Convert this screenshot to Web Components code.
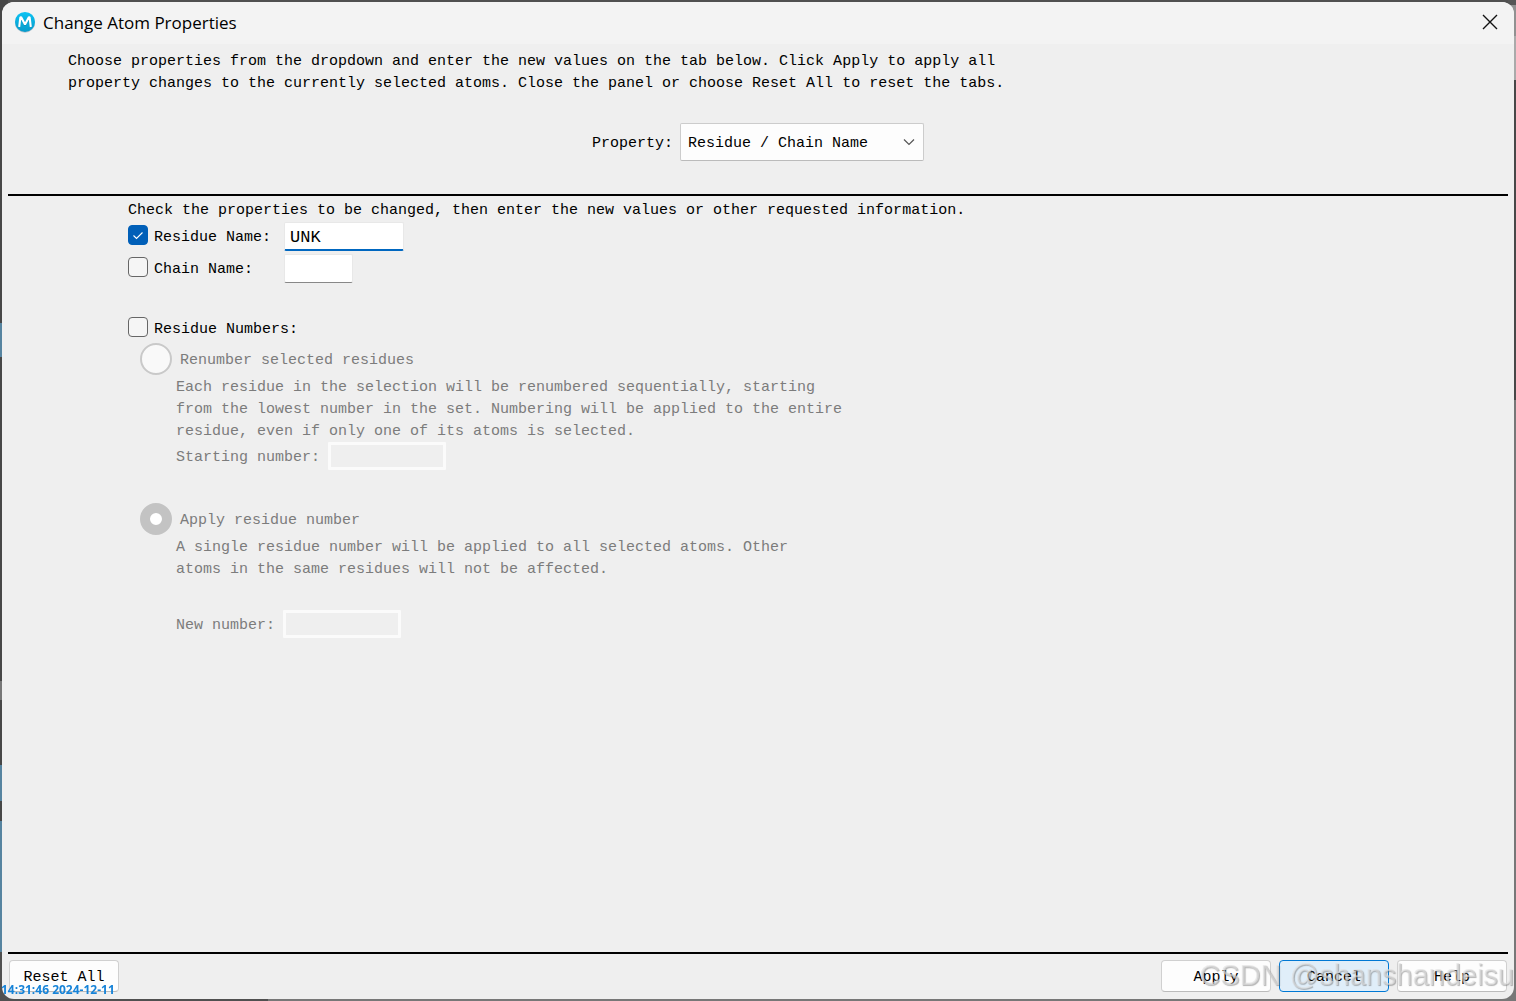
<!DOCTYPE html>
<html lang="en">
<head>
<meta charset="utf-8">
<title>Change Atom Properties</title>
<style>
html, body { height: 100%; margin: 0; }
body {
  --mono: "Liberation Mono", monospace;
  --ui: "Open Sans", "Noto Sans", sans-serif;
  font: 15px/22px var(--mono);
  color: #000;
  overflow: hidden;
}
</style>
</head>
<body>
<dialog-window heading="Change Atom Properties">
  <property-picker slot="intro">
    Choose properties from the dropdown and enter the new values on the tab below. Click Apply to apply all<br>
    property changes to the currently selected atoms. Close the panel or choose Reset All to reset the tabs.
  </property-picker>
  <residue-form></residue-form>
  <push-button slot="left">Reset All</push-button>
  <push-button slot="right">Apply</push-button>
  <push-button slot="right" primary>Cancel</push-button>
  <push-button slot="right">Help</push-button>
</dialog-window>
<stamp-text kind="time">14:31:46 2024-12-11</stamp-text>
<stamp-text kind="mark">CSDN @shanshandeisu</stamp-text>

<script>
class Base extends HTMLElement {
  connectedCallback() {
    if (this.shadowRoot) return;
    this.attachShadow({ mode: "open" }).innerHTML = "<style>*{box-sizing:border-box}</style>" + this.render();
  }
}

customElements.define("app-logo", class extends Base {
  render() {
    return `<style>:host{display:block;width:22px;height:22px} svg{display:block}</style>
    <svg width="22" height="22" viewBox="0 0 22 22" aria-hidden="true">
      <defs><linearGradient id="g" x1="0" y1="0" x2="0" y2="1"><stop offset="0" stop-color="#0cc3f3"/><stop offset="1" stop-color="#079bcb"/></linearGradient></defs>
      <circle cx="11" cy="11.7" r="10" fill="#b9c4ce"/>
      <circle cx="11" cy="10.9" r="10" fill="url(#g)"/>
      <path d="M5.6 16.7 6.6 6.7H7.2L11 14.2 14.8 6.7H15.4L16.4 16.7" fill="none" stroke="#087da6" stroke-opacity=".5" stroke-width="2.2" stroke-linejoin="bevel"/>
      <path d="M5.2 16 6.4 6.2H7.2L11 13.6 14.8 6.2H15.6L16.8 16" fill="none" stroke="#fff" stroke-width="2.1" stroke-linejoin="bevel"/>
    </svg>`;
  }
});

customElements.define("dialog-window", class extends Base {
  render() {
    return `<style>
      :host{display:block;height:100%;box-sizing:border-box;padding:2px;
        background:
          linear-gradient(#474747 323px,#5684a0 323px 357px,#474747 357px 681px,#777 681px 700px,#474747 700px 765px,#5684a0 765px 801px,#474747 801px 821px,#5684a0 821px 952px,#505050 952px) left/8px 100% no-repeat,
          linear-gradient(#555 5px,#919191 5px 36px,#aaa 36px 80px,#474747 80px 400px,#777 400px) right/8px 100% no-repeat,
          linear-gradient(90deg,#505050 268px,#777 268px) bottom/100% 8px no-repeat,#505050}
      .frame{height:100%;display:flex;flex-direction:column;background:#efefef;border-radius:12px;overflow:hidden}
      header{flex:none;height:42px;padding:0 15px 0 12px;display:flex;align-items:center;gap:7px;background:#f3f3f3}
      app-logo,header button{margin-bottom:2px}
      h1{flex:1;margin:0;font:400 17px/24px var(--ui)}
      header button{width:18px;height:18px;padding:0;border:0;background:none}
      header svg{display:block}
      main{flex:1;min-height:0;padding:0 6px;display:flex;flex-direction:column}
      .tab{flex:1;border:solid #000;border-width:2px 0;padding:4px 120px}
      footer{flex:none;display:flex;justify-content:space-between;padding:6px 7px 7px}
      footer div{display:flex;gap:8px}
    </style>
    <div class="frame">
      <header><app-logo></app-logo><h1>${this.getAttribute("heading")}</h1>
        <button aria-label="Close"><svg width="18" height="18" viewBox="0 0 18 18"><path d="M2 2 16 16M16 2 2 16" stroke="#111" stroke-width="1.4" fill="none"/></svg></button>
      </header>
      <main><slot name="intro"></slot><section class="tab"><slot></slot></section></main>
      <footer><div><slot name="left"></slot></div><div><slot name="right"></slot></div></footer>
    </div>`;
  }
});

customElements.define("property-picker", class extends Base {
  render() {
    return `<style>
      :host{display:block;padding:7px 60px 33px}
      p{margin:0 0 28px}
      .row{display:flex;justify-content:center;align-items:center;gap:7px;margin:0 -60px}
      .box{display:grid;align-items:center}
      label{padding-top:3px}
      select,svg{grid-area:1/1}
      select{appearance:none;width:244px;height:38px;padding:3px 36px 0 7px;font:inherit;color:#000;background:#fdfdfd;border:1px solid #ccc;border-bottom-color:#bbb;border-radius:2px}
      svg{justify-self:end;margin-right:8px;pointer-events:none}
    </style>
    <p><slot></slot></p>
    <div class="row"><label for="p">Property:</label>
      <span class="box"><select id="p"><option>Residue / Chain Name</option></select>
      <svg width="14" height="8" viewBox="0 0 14 8"><path d="M2 1.5 7 6.5 12 1.5" fill="none" stroke="#555" stroke-width="1.2"/></svg></span>
    </div>`;
  }
});

customElements.define("check-field", class extends Base {
  render() {
    const on = this.hasAttribute("checked");
    return `<style>
      :host{display:flex;align-items:flex-start;height:32px}
      .pick{display:flex;align-items:center;gap:6px;width:156px;height:32px;white-space:nowrap}
      input{appearance:none;flex:none;width:20px;height:20px;margin:0;border:1px solid #666;border-radius:4px;background:#f5f5f5}
      input:checked{border-color:#005fb8;background:#005fb8}
      .tick{display:grid;place-items:center;margin-bottom:6px}
      .tick>*{grid-area:1/1}
      svg{pointer-events:none}
    </style>
    <label class="pick"><span class="tick"><input type="checkbox"${on ? " checked" : ""}>${on ? `<svg width="20" height="20" viewBox="0 0 20 20"><path d="M5.5 10.5 8.5 13.5 14.5 7.5" fill="none" stroke="#fff" stroke-width="1.1"/></svg>` : ""}</span>${this.getAttribute("label")}</label><slot></slot>`;
  }
});

customElements.define("text-field", class extends Base {
  render() {
    return `<style>
      :host{display:block}
      input{display:block;width:120px;height:29px;padding:2px 5px 0;font:17px/22px var(--mono);color:#000;
        background:#fff;border:1px solid #e8e8e8;border-bottom:1px solid #888;border-radius:2px;outline:0}
      :host([small]) input{width:69px}
      :host([active]) input{border-bottom:2px solid #0067c0}
    </style>
    <input type="text" aria-label="${this.getAttribute("label")}" value="${this.getAttribute("value") || ""}">`;
  }
});

customElements.define("number-option", class extends Base {
  render() {
    return `<style>
      :host{display:block;padding-left:12px;color:#7c7c7c}
      .pick{display:flex;align-items:center;gap:8px;height:32px}
      .pick input{appearance:none;width:32px;height:32px;margin:0 0 4px;border:2px solid #c9c9c9;border-radius:50%;background:#f9f9f9}
      .pick input:checked{border:10px solid #c3c3c3;background:#fff}
      p{margin:0;padding-left:36px}
      .num{display:flex;align-items:center;gap:8px;height:30px;padding-left:36px}
      .num input{width:118px;height:28px;margin:0 0 4px;background:#efefef;border:3px solid #fbfbfb;border-radius:1px}
      :host([spaced]) .num{margin-top:30px}
    </style>
    <label class="pick"><input type="radio" disabled${this.hasAttribute("checked") ? " checked" : ""}>${this.getAttribute("label")}</label>
    <p><slot></slot></p>
    <div class="num"><label for="n">${this.getAttribute("number")}</label><input id="n" type="text" disabled></div>`;
  }
});

customElements.define("residue-form", class extends Base {
  render() {
    return `<style>
      :host{display:block}
      p{margin:0}
      .numbers{margin-top:28px;height:31px}
      number-option + number-option{margin-top:32px}
    </style>
    <p>Check the properties to be changed, then enter the new values or other requested information.</p>
    <check-field label="Residue Name:" checked><text-field label="Residue Name" value="UNK" active></text-field></check-field>
    <check-field label="Chain Name:"><text-field label="Chain Name" small></text-field></check-field>
    <check-field class="numbers" label="Residue Numbers:"></check-field>
    <number-option label="Renumber selected residues" number="Starting number:">Each residue in the selection will be renumbered sequentially, starting<br>from the lowest number in the set. Numbering will be applied to the entire<br>residue, even if only one of its atoms is selected.</number-option>
    <number-option label="Apply residue number" number="New number:" checked spaced>A single residue number will be applied to all selected atoms. Other<br>atoms in the same residues will not be affected.</number-option>`;
  }
});

customElements.define("push-button", class extends Base {
  render() {
    return `<style>
      :host{display:block}
      button{display:block;width:110px;height:32px;padding:3px 0 0;font:inherit;color:#000;background:#fdfdfd;border:1px solid #d0d0d0;border-bottom-color:#bbb;border-radius:4px}
      :host([primary]) button{background:#e0eef9;border-color:#0078d4}
    </style><button type="button"><slot></slot></button>`;
  }
});

customElements.define("stamp-text", class extends Base {
  render() {
    return `<style>
      :host{position:fixed;white-space:nowrap;pointer-events:none}
      :host([kind=time]){left:1px;bottom:2px;font:700 12px/18px var(--ui);color:#1683d8}
      :host([kind=mark]){right:2px;bottom:10px;font:29px/32px "Liberation Sans",sans-serif;color:rgba(225,225,225,.6);text-shadow:1px 1px 1px rgba(90,90,90,.45)}
    </style><slot></slot>`;
  }
});
</script>
</body>
</html>
